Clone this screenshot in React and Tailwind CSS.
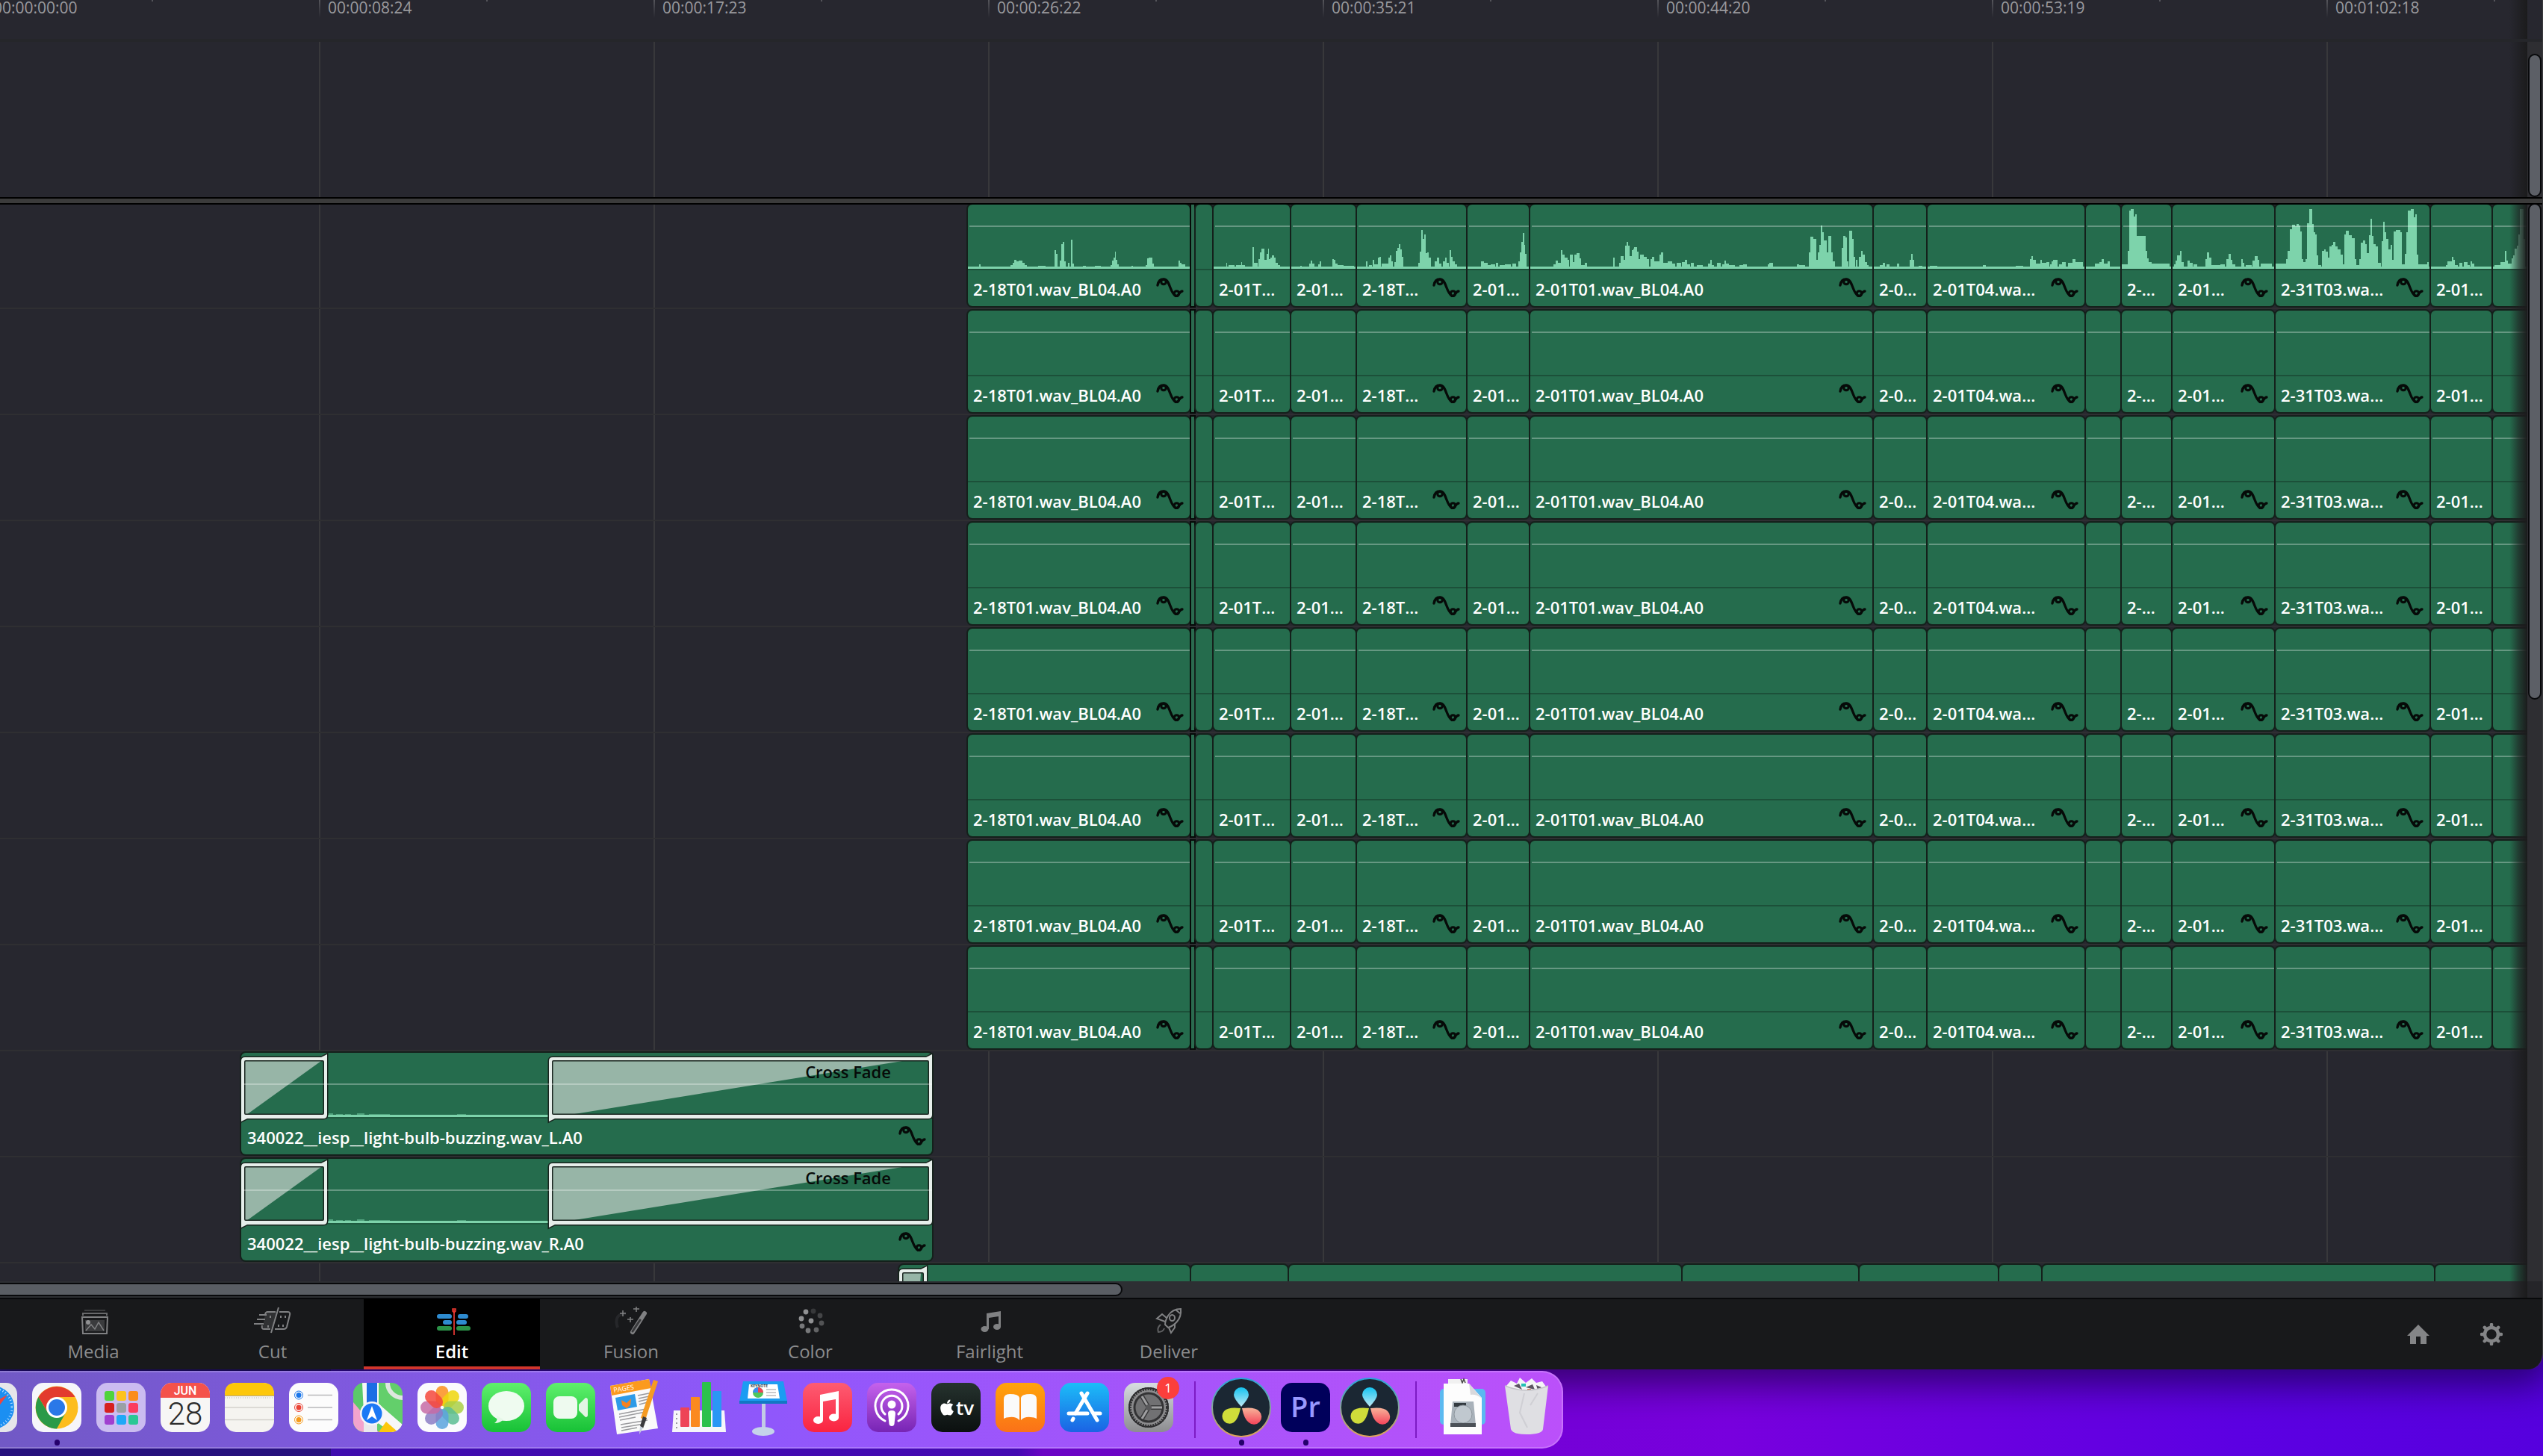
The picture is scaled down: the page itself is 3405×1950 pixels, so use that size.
import React from 'react';
import { FaApple } from 'react-icons/fa';
import clsx from 'clsx';

const RULER = [
  '00:00:00:00',
  '00:00:08:24',
  '00:00:17:23',
  '00:00:26:22',
  '00:00:35:21',
  '00:00:44:20',
  '00:00:53:19',
  '00:01:02:18',
];

// width in px, optional label, fx = automation curve icon,
// wave = list of [x, width, height] peaks
const CLIPS = [
  {
    w: 297, label: '2-18T01.wav_BL04.A0', fx: true, line: true,
    wave: [[15, 2, 6], [57, 4, 5], [60, 3, 8], [62, 3, 12], [65, 3, 10], [68, 5, 11], [73, 3, 8], [76, 3, 5], [94, 10, 4], [116, 2, 25], [118, 2, 20], [123, 2, 11], [125, 2, 33], [127, 2, 36], [129, 2, 10], [134, 2, 8], [138, 2, 39], [140, 2, 7], [154, 4, 4], [170, 8, 4], [191, 2, 5], [193, 2, 11], [195, 2, 15], [197, 1, 23], [198, 2, 12], [200, 2, 6], [219, 2, 4], [238, 2, 5], [240, 2, 14], [242, 5, 15], [247, 2, 7], [282, 2, 11], [284, 2, 8], [286, 5, 6]],
  },
  { w: 4, sliver: true },
  { w: 22 },
  {
    w: 102, label: '2-01T...', line: true,
    wave: [[17, 1, 8], [20, 8, 5], [30, 12, 5], [37, 1, 9], [52, 2, 29], [54, 5, 8], [60, 2, 13], [62, 2, 22], [64, 4, 27], [68, 3, 12], [71, 2, 20], [73, 1, 27], [74, 2, 13], [76, 2, 15], [78, 3, 18], [81, 2, 15], [83, 3, 8], [86, 3, 5]],
  },
  {
    w: 86, label: '2-01...', line: true,
    wave: [[12, 2, 4], [24, 2, 7], [26, 2, 11], [28, 3, 7], [36, 2, 6], [38, 2, 10], [55, 2, 13], [57, 2, 12], [59, 3, 7], [62, 8, 5], [70, 14, 4]],
  },
  {
    w: 146, label: '2-18T...', fx: true, line: true,
    wave: [[12, 2, 10], [16, 4, 5], [21, 2, 12], [23, 5, 6], [28, 2, 15], [30, 2, 16], [33, 9, 7], [42, 2, 15], [44, 2, 18], [46, 2, 10], [50, 2, 9], [52, 2, 24], [54, 2, 28], [56, 2, 33], [58, 2, 26], [60, 2, 16], [82, 2, 8], [84, 2, 23], [86, 2, 52], [88, 2, 40], [90, 2, 46], [92, 2, 21], [94, 2, 22], [96, 3, 15], [104, 3, 10], [107, 3, 15], [110, 3, 7], [115, 3, 10], [118, 2, 15], [120, 3, 8], [124, 2, 25], [126, 2, 16], [128, 3, 10], [131, 3, 6]],
  },
  {
    w: 82, label: '2-01...', line: true,
    wave: [[18, 4, 10], [22, 5, 8], [27, 4, 5], [31, 6, 6], [38, 3, 8], [43, 7, 5], [50, 8, 6], [60, 5, 7], [68, 2, 10], [70, 2, 22], [72, 2, 36], [74, 2, 48], [76, 1, 32], [77, 2, 20]],
  },
  {
    w: 458, label: '2-01T01.wav_BL04.A0', fx: true, line: true,
    wave: [[31, 3, 6], [34, 3, 11], [37, 4, 8], [41, 2, 25], [43, 3, 19], [46, 4, 15], [50, 2, 12], [53, 4, 19], [57, 2, 9], [59, 3, 19], [62, 4, 21], [66, 2, 14], [68, 6, 5], [73, 3, 8], [111, 2, 15], [119, 2, 8], [121, 4, 17], [125, 2, 12], [127, 2, 31], [129, 2, 36], [131, 2, 31], [133, 3, 17], [136, 2, 25], [138, 1, 27], [139, 4, 29], [143, 2, 23], [145, 2, 13], [147, 5, 19], [152, 4, 16], [156, 3, 13], [161, 2, 13], [163, 3, 16], [166, 8, 10], [173, 2, 19], [175, 3, 22], [178, 6, 8], [184, 6, 10], [190, 4, 7], [196, 6, 8], [203, 4, 9], [207, 3, 12], [210, 4, 6], [215, 4, 8], [223, 8, 5], [238, 3, 7], [241, 2, 12], [243, 3, 5], [250, 5, 8], [257, 3, 6], [260, 2, 11], [262, 4, 7], [266, 8, 5], [280, 6, 5], [285, 5, 6], [318, 2, 6], [320, 5, 8], [357, 3, 6], [360, 8, 5], [373, 2, 22], [375, 4, 43], [379, 4, 40], [383, 3, 12], [385, 2, 22], [387, 2, 32], [389, 2, 58], [391, 2, 49], [393, 4, 38], [397, 2, 22], [399, 4, 44], [403, 2, 22], [405, 3, 10], [417, 2, 28], [419, 3, 44], [422, 2, 42], [424, 2, 10], [427, 4, 51], [431, 2, 40], [433, 2, 16], [436, 2, 12], [440, 3, 16], [443, 2, 24], [445, 3, 19], [448, 3, 9], [451, 2, 5]],
  },
  {
    w: 70, label: '2-0...', line: true,
    wave: [[8, 4, 5], [12, 3, 8], [17, 4, 6], [31, 3, 7], [48, 2, 12], [50, 2, 20], [52, 2, 12], [60, 5, 4]],
  },
  {
    w: 210, label: '2-01T04.wa...', fx: true, line: true,
    wave: [[3, 10, 4], [74, 4, 5], [118, 10, 4], [137, 2, 13], [139, 2, 17], [141, 4, 12], [145, 6, 7], [151, 2, 12], [153, 6, 8], [159, 4, 9], [164, 3, 6], [166, 2, 10], [168, 6, 12], [176, 4, 6], [180, 5, 9], [188, 6, 8], [194, 4, 13], [198, 10, 9]],
  },
  {
    w: 46, line: true,
    wave: [[12, 6, 7], [18, 3, 9], [21, 3, 13], [24, 5, 7], [29, 3, 10]],
  },
  {
    w: 66, label: '2-...', line: true,
    wave: [[0, 8, 6], [8, 2, 24], [10, 2, 78], [12, 4, 80], [16, 2, 70], [18, 2, 73], [20, 2, 44], [22, 10, 44], [32, 2, 24], [34, 2, 14], [36, 4, 9], [40, 24, 7]],
  },
  {
    w: 136, label: '2-01...', fx: true, line: true,
    wave: [[2, 2, 6], [4, 2, 11], [6, 4, 18], [10, 2, 24], [12, 3, 9], [20, 3, 11], [23, 4, 8], [28, 5, 6], [44, 2, 13], [46, 3, 22], [49, 3, 15], [52, 12, 5], [64, 6, 6], [72, 3, 13], [75, 3, 20], [78, 2, 12], [80, 4, 6], [92, 2, 13], [94, 2, 8], [98, 8, 5], [107, 3, 11], [110, 4, 17], [114, 2, 12], [118, 15, 7]],
  },
  {
    w: 206, label: '2-31T03.wa...', fx: true, line: true,
    wave: [[0, 14, 7], [14, 2, 13], [16, 3, 24], [19, 3, 53], [22, 4, 59], [26, 2, 57], [28, 3, 60], [31, 2, 58], [33, 2, 50], [35, 2, 13], [37, 4, 9], [40, 2, 13], [42, 3, 61], [45, 4, 80], [49, 2, 60], [51, 2, 49], [53, 2, 46], [55, 2, 18], [57, 4, 5], [62, 3, 24], [65, 2, 26], [67, 3, 23], [70, 2, 15], [72, 3, 30], [75, 2, 32], [77, 3, 36], [80, 3, 30], [83, 4, 26], [87, 3, 19], [90, 2, 6], [92, 2, 46], [94, 4, 51], [98, 4, 45], [102, 4, 41], [106, 2, 13], [108, 4, 5], [112, 2, 13], [114, 3, 35], [117, 3, 38], [120, 2, 33], [122, 3, 21], [125, 2, 45], [127, 2, 67], [129, 2, 44], [131, 3, 33], [134, 3, 30], [137, 4, 8], [142, 2, 37], [144, 2, 63], [146, 2, 49], [148, 3, 40], [151, 3, 26], [154, 2, 32], [156, 2, 12], [158, 3, 50], [161, 6, 52], [167, 2, 49], [169, 4, 6], [173, 2, 20], [175, 2, 49], [177, 4, 78], [181, 4, 80], [185, 2, 69], [187, 2, 73], [189, 2, 19], [191, 12, 6], [203, 2, 9]],
  },
  {
    w: 81, label: '2-01...', line: true,
    wave: [[20, 3, 5], [22, 6, 10], [28, 2, 16], [30, 2, 12], [32, 4, 5], [38, 4, 8], [44, 5, 9], [49, 3, 5], [53, 2, 10], [55, 3, 7]],
  },
  {
    w: 60, line: true,
    wave: [[2, 8, 5], [10, 6, 9], [16, 2, 24], [18, 2, 11], [20, 5, 7], [25, 2, 14], [27, 2, 18], [29, 3, 27], [32, 2, 31], [34, 2, 46], [36, 5, 80], [41, 2, 40]],
  },
];

const LOWER_CLIPS = [389, 129, 525, 235, 185, 56, 524, 200];

const TABS = ['Media', 'Cut', 'Edit', 'Fusion', 'Color', 'Fairlight', 'Deliver'];

/* ---------- Timeline ---------- */

function CurveIcon() {
  return (
    <svg viewBox="0 0 37 26" className="h-[26px] w-[37px] shrink-0" fill="none" stroke="#060a08" strokeWidth="3.300" strokeLinecap="round">
      <path d="M2 10 C3 4 6 2 10 2 C19 2 18 21 27 25 C30 25 31 18 35 18" />
      <circle cx="10" cy="5.500" r="3.300" strokeWidth="3" />
      <circle cx="27.500" cy="21" r="3.300" strokeWidth="3" />
    </svg>
  );
}

function Waveform({ peaks, width }) {
  const base = 84;
  const d = peaks.map(([x, w, h]) => `M${x} ${base}v${-h}h${w}v${h}z`).join('');
  return (
    <svg width={width} height={base} className="block shrink-0" fill="#7dd3ab" shapeRendering="crispEdges">
      <path d={`M0 ${base}v-3h${width}v3z${d}`} />
    </svg>
  );
}

function Clip({ clip, showWave }) {
  if (clip.sliver) {
    return <div className="h-[136px] shrink-0 bg-[#2b6b4f] shadow-[0_0_0_2px_#060a08]" style={{ width: clip.w }} />;
  }
  return (
    <div
      className="flex h-[136px] shrink-0 flex-col overflow-hidden rounded-md bg-[#256c4d] shadow-[0_0_0_2px_#14201b]"
      style={{ width: clip.w }}
    >
      <div className="relative flex h-[86px] items-end">
        {showWave && clip.wave && <Waveform peaks={clip.wave} width={clip.w} />}
        {clip.line && <div className="absolute top-7 right-0 left-0.5 h-0.5 bg-white/30" />}
      </div>
      <div className="flex grow items-start justify-between border-t-2 border-[#1c5039] pt-2.5 pr-2 pl-[7px]">
        {clip.label && <span className="text-[22px] leading-[30px] font-semibold whitespace-nowrap text-white">{clip.label}</span>}
        {clip.fx && <CurveIcon />}
      </div>
    </div>
  );
}

function Track({ children, className }) {
  return (
    <div className={clsx('flex h-[142px] gap-0.5 overflow-hidden border-b-2 border-[#2f2f32] pt-0.5', className)}>
      {children}
    </div>
  );
}

// ramp = [bottom x, distance of the top end from the right edge]
function FadeBox({ width, ramp, children }) {
  const w = width;
  return (
    <div className="relative h-[96px] shrink-0" style={{ width }}>
      <svg width={w} height="96" className="absolute inset-0 overflow-visible">
        <path d={`M5 11H${w - ramp[1]}L${ramp[0]} 83H5z`} fill="#97b5a7" />
        <path
          fillRule="evenodd"
          fill="#e6eeea"
          stroke="#18241e"
          strokeWidth="3"
          paintOrder="stroke"
          d={`M0 11Q0 6 5 6H${w - 8}L${w} 2V83Q${w} 88 ${w - 5} 88H8L0 92z M6 10Q4 10 4 12V81Q4 83 6 83H${w - 6}Q${w - 4} 83 ${w - 4} 81V12Q${w - 4} 10 ${w - 6} 10z`}
        />
      </svg>
      {children}
    </div>
  );
}

function BuzzClip({ name }) {
  return (
    <div className="relative ml-[323px] h-[136px] w-[925px] shrink-0 rounded-md bg-[#256c4d] shadow-[0_0_0_2px_#14201b]">
      <div className="flex h-[86px]">
        <FadeBox width={115} ramp={[7, 8]} />
        <div className="flex grow items-end">
          <svg width="297" height="8" className="block" fill="#7dd3ab" shapeRendering="crispEdges">
            <path d="M0 5H297V8H0z" />
            <path d="M2 3h6v2h-6zM12 4h9v1h-9zM24 4h8v1h-8zM40 3h10v2h-10zM56 4h28v1h-28zM174 4h12v1h-12z" fill="#4fa17c" />
          </svg>
        </div>
        <FadeBox width={513} ramp={[28, 40]}>
          <div className="relative flex justify-end pt-2.5 pr-[55px]">
            <span className="text-[22px] leading-[30px] font-semibold text-[#060a08]">Cross Fade</span>
          </div>
        </FadeBox>
      </div>
      <div className="absolute top-[41px] right-0 left-0.5 h-0.5 bg-white/30" />
      <div className="flex items-start justify-between border-t-2 border-[#1c5039]/60 pt-2.5 pr-2 pl-2">
        <span className="text-[22px] leading-[30px] font-semibold whitespace-nowrap text-white">{name}</span>
        <CurveIcon />
      </div>
    </div>
  );
}

function EdgeFade() {
  return <div className="pointer-events-none absolute inset-y-0 right-0 w-6 bg-linear-to-r from-transparent via-[#1e1e20]/60 to-[#1b1b1c]" />;
}

function Ruler() {
  return (
    <div className="flex h-14 border-b-4 border-[#25262a]">
      <div className="relative min-w-0 grow overflow-hidden">
        <div className="-ml-[21px] flex">
          {RULER.map((time) => (
            <div key={time} className="grid w-[448px] shrink-0 grid-cols-2">
              <div className="flex gap-2.5">
                <span className="h-6 w-0.5 bg-linear-to-b from-[#55555b] to-[#27272f]" />
                <span className="text-[21px] leading-5 text-[#9a9a9e]">{time}</span>
              </div>
              <span className="h-0.5 w-0.5 bg-[#55555b]" />
            </div>
          ))}
        </div>
        <EdgeFade />
      </div>
      <div className="w-5 shrink-0" />
    </div>
  );
}

const GRID = 'bg-[linear-gradient(90deg,#38383b_2px,transparent_2px)] bg-[length:448px_100%] bg-[position:427px_0]';

function Timeline() {
  return (
    <div className="bg-[#27272f]">
      <Ruler />

      {/* video tracks */}
      <div className="flex h-52">
        <div className={clsx('relative grow', GRID)}>
          <EdgeFade />
        </div>
        <div className="flex w-5 shrink-0 justify-center bg-[#2e2e32] pt-4">
          <div className="w-[18px] rounded-full border-2 border-[#08090b] bg-[#5c5f66]" />
        </div>
      </div>

      <div className="relative z-10 h-2 border-t-2 border-black bg-[#3b3b3b] shadow-[0_2px_0_#000]" />

      {/* audio tracks */}
      <div className="flex">
        <div className={clsx('relative min-w-0 grow overflow-hidden', GRID)}>
          {[0, 1, 2, 3, 4, 5, 6, 7].map((row) => (
            <Track key={row} className="pl-[1296px]">
              {CLIPS.map((clip, i) => (
                <Clip key={i} clip={clip} showWave={row === 0} />
              ))}
            </Track>
          ))}
          <Track>
            <BuzzClip name="340022__iesp__light-bulb-buzzing.wav_L.A0" />
          </Track>
          <Track>
            <BuzzClip name="340022__iesp__light-bulb-buzzing.wav_R.A0" />
          </Track>
          <div className="flex h-6 gap-0.5 overflow-hidden pt-0.5 pl-[1204px]">
            {LOWER_CLIPS.map((w, i) => (
              <div key={i} className="h-9 shrink-0 rounded-md bg-[#256c4d] shadow-[0_0_0_2px_#14201b]" style={{ width: w }}>
                {i === 0 && <FadeBox width={37} ramp={[24, 8]} />}
              </div>
            ))}
          </div>
          <EdgeFade />
        </div>
        <div className="flex w-5 shrink-0 items-start justify-center bg-[#2e2e32]">
          <div className="h-[665px] w-[18px] rounded-full border-2 border-[#08090b] bg-[#5c5f66]" />
        </div>
      </div>

      {/* horizontal scrollbar */}
      <div className="flex h-6 border-b-2 border-[#08090b]">
        <div className="relative grow bg-[#2d2f33] pt-0.5">
          <div className="-ml-4 h-[18px] w-[1519px] rounded-full border-2 border-[#08090b] bg-[#5a5e64]" />
          <EdgeFade />
        </div>
        <div className="w-5 shrink-0 bg-[#252529]" />
      </div>
    </div>
  );
}

/* ---------- Page tabs ---------- */

function TabIcon({ name }) {
  const svg = { viewBox: '0 0 50 38', className: 'h-[38px] w-[50px]', fill: 'none', stroke: '#808183', strokeWidth: 2 };
  if (name === 'Media') {
    return (
      <svg {...svg}>
        <path d="M13 5H41" stroke="#3c3d3f" />
        <path d="M11 12V9H43V12" stroke="#68696b" />
        <path d="M10 14H44L43 36H11z" />
        <rect x="14" y="18" width="26" height="15" fill="#3a3b3d" stroke="none" />
        <circle cx="18" cy="21" r="3" fill="#909193" stroke="none" />
        <path d="M15 32L22 24L27 30L32 21L39 32" strokeWidth="1.500" />
      </svg>
    );
  }
  if (name === 'Cut') {
    return (
      <svg {...svg}>
        <path d="M15 9Q16 7 18 7H30L24 29H14Q11 29 12 26z" fill="#303133" stroke="none" />
        <path d="M29 7H18Q16 7 15 10M11 25Q10 30 13 30H22M34 7H45Q49 7 48 11L44 27Q43 30 40 30H28M7 11H17M4 17H15M0 23H13" />
        <path d="M33 1L23 35" />
        <path d="M22 12v3M19 25v3M36 12v3M42 12v3M33 24v3M39 24v3" />
      </svg>
    );
  }
  if (name === 'Edit') {
    return (
      <svg {...svg} stroke="none">
        <g fill="#2e8bd0">
          <rect x="5" y="10" width="20" height="6" rx="3" />
          <rect x="33" y="10" width="14" height="6" rx="3" />
          <rect x="13" y="18" width="12" height="6" rx="3" />
          <rect x="31" y="18" width="14" height="6" rx="3" />
        </g>
        <g fill="#2b9348">
          <rect x="5" y="26" width="20" height="6" rx="3" />
          <rect x="31" y="26" width="19" height="6" rx="3" />
        </g>
        <path d="M28 4V38" stroke="#c9302c" strokeWidth="2" />
        <path d="M26 3H30V6L28 8L26 6z" fill="none" stroke="#f03a30" strokeWidth="1.500" />
      </svg>
    );
  }
  if (name === 'Fusion') {
    return (
      <svg {...svg}>
        <path d="M7 28Q1 10 18 9" stroke="#26272a" strokeWidth="4" />
        <path d="M27 34L43 9" strokeWidth="6" strokeLinecap="round" />
        <path d="M27 33L37 18" stroke="#37383a" strokeWidth="3" strokeLinecap="round" />
        <path d="M32 0V7M28 3H36M14 5V13M10 9H18M24 14V21M20 17H28" strokeWidth="1.500" />
      </svg>
    );
  }
  if (name === 'Color') {
    return (
      <svg {...svg} stroke="none">
        <g fill="#909193">
          <circle cx="19" cy="7" r="3.400" />
          <circle cx="13" cy="16" r="3.400" />
          <circle cx="26" cy="19" r="3.400" />
          <circle cx="14" cy="26" r="3.400" fill="#77787a" />
          <circle cx="22" cy="32" r="3.400" fill="#77787a" />
          <circle cx="33" cy="31" r="3.400" fill="#626365" />
          <circle cx="40" cy="22" r="3.400" fill="#525355" />
          <circle cx="38" cy="12" r="3.400" fill="#444547" />
          <circle cx="29" cy="6" r="3.400" fill="#37383a" />
        </g>
      </svg>
    );
  }
  if (name === 'Fairlight') {
    return (
      <svg {...svg} fill="#808183" stroke="none">
        <path d="M21 9L40 6V27H37V13L24 15V30H21z" />
        <ellipse cx="18.500" cy="30" rx="5" ry="4" />
        <ellipse cx="35" cy="27" rx="5" ry="4" />
      </svg>
    );
  }
  return (
    <svg {...svg}>
      <path d="M41 3Q30 3 24 12Q20 19 20 24L24 28Q31 26 36 20Q42 13 41 3zM34 4L40 9" />
      <ellipse cx="29.500" cy="15" rx="3.500" ry="4" />
      <path d="M22 15L16 10L9 16L20 20M25 28L28 35L33 28L33 23" />
      <path d="M14 24Q9 28 11 34Q17 34 19 29" stroke="#5f6062" />
    </svg>
  );
}

function PageBar() {
  return (
    <nav className="flex h-[94px] items-stretch gap-1 bg-[#18191b] pl-[7px]">
      {TABS.map((tab) => (
        <button
          key={tab}
          className={clsx(
            'flex w-[236px] shrink-0 flex-col items-center gap-1.5 border-b-4 pt-2.5 text-2xl',
            tab === 'Edit' ? 'border-[#d1362c] bg-black font-semibold text-white' : 'border-transparent text-[#8b8c8e]'
          )}
        >
          <TabIcon name={tab} />
          <span className="leading-8">{tab}</span>
        </button>
      ))}
      <div className="ml-auto flex items-center gap-[68px] pr-[53px]">
        <button aria-label="Home">
          <svg viewBox="0 0 30 30" className="size-[30px]" fill="#848587">
            <path d="M15 2L30 17H26V28H18V18H12V28H4V17H0z" />
          </svg>
        </button>
        <button aria-label="Settings">
          <svg viewBox="0 0 30 30" className="size-[30px]" fill="none" stroke="#848587">
            <circle cx="15" cy="15" r="9" strokeWidth="4.500" />
            <path d="M15 2V5M15 25V28M2 15H5M25 15H28M5.800 5.800L8 8M22 22L24.200 24.200M5.800 24.200L8 22M22 8L24.200 5.800" strokeWidth="4.500" strokeLinecap="round" />
          </svg>
        </button>
      </div>
    </nav>
  );
}

/* ---------- Dock ---------- */

function Tile({ fill, children }) {
  return (
    <svg viewBox="0 0 66 66" className="size-[66px] overflow-visible">
      <rect width="66" height="66" rx="15" fill={fill} />
      {children}
    </svg>
  );
}

function Gradient({ id, from, to }) {
  return (
    <linearGradient id={id} x1="0" y1="0" x2="0" y2="1">
      <stop offset="0" stopColor={from} />
      <stop offset="1" stopColor={to} />
    </linearGradient>
  );
}

function Safari() {
  return (
    <Tile fill="#e6e6ea">
      <circle cx="33" cy="33" r="29" fill="#1b8ff2" />
      <circle cx="33" cy="33" r="26" fill="none" stroke="#bfe3ff" strokeWidth="3" strokeDasharray="1 3" />
      <path d="M53 16L29 29L37 37z" fill="#f0453c" />
      <path d="M13 50L29 29L37 37z" fill="#eef2f6" />
    </Tile>
  );
}

function Chrome() {
  return (
    <Tile fill="#f6f6fa">
      <circle cx="33" cy="33" r="28.500" fill="#fdbd1d" />
      <path d="M33 19H57.500A28.500 28.500 0 0 0 8.500 19L20 38z" fill="#e33b2e" />
      <path d="M8.500 19A28.500 28.500 0 0 0 33 61.500L45.500 39L33 33L21 40z" fill="#2a9a48" />
      <circle cx="33" cy="33" r="14" fill="#fff" />
      <circle cx="33" cy="33" r="11" fill="#2a78e8" />
    </Tile>
  );
}

function Launchpad() {
  const colors = ['#4fd33c', '#fdc21c', '#fb8c1a', '#d6201f', '#9aa0a6', '#fb3d5f', '#a03fd0', '#1fa8f7', '#2ac795'];
  return (
    <Tile fill="#cbbcf0">
      {colors.map((c, i) => (
        <rect key={c} x={11 + (i % 3) * 16} y={11 + Math.floor(i / 3) * 16} width="13" height="13" rx="3" fill={c} />
      ))}
    </Tile>
  );
}

function Calendar() {
  return (
    <div className="flex size-[66px] flex-col items-center overflow-hidden rounded-[15px] bg-[#f7f6f5]">
      <div className="w-full bg-[#f4524b] pt-0.5 text-center font-['Roboto',sans-serif] text-[16px] leading-[18px] font-medium text-white">JUN</div>
      <div className="font-['Roboto',sans-serif] text-[42px] leading-[44px] font-light text-[#2b2b2b]">28</div>
    </div>
  );
}

function Notes() {
  return (
    <Tile fill="#f5f4f0">
      <path d="M0 17V15Q0 0 15 0H51Q66 0 66 15V17z" fill="#fdc70a" />
      <path d="M0 17.500H66" stroke="#b5a88a" />
      <path d="M0 20H66" stroke="#b8b6b0" strokeDasharray="1 2" />
      <path d="M0 33H66M0 49.500H66" stroke="#d3d1cc" strokeWidth="1.500" />
    </Tile>
  );
}

function Reminders() {
  return (
    <Tile fill="#fcfcfc">
      {['#1a76ea', '#ea4335', '#f59a1b'].map((c, i) => (
        <g key={c}>
          <circle cx="13" cy={16.5 + i * 16.5} r="5.500" fill="none" stroke={c} strokeWidth="1" />
          <circle cx="13" cy={16.5 + i * 16.5} r="3.500" fill={c} />
          <path d={`M25 ${16.5 + i * 16.5}H58`} stroke="#b9b9bb" strokeWidth="1.500" />
        </g>
      ))}
    </Tile>
  );
}

function Maps() {
  return (
    <Tile fill="#63cf6b">
      <defs>
        <clipPath id="maps-tile"><rect width="66" height="66" rx="15" /></clipPath>
      </defs>
      <g clipPath="url(#maps-tile)">
        <path d="M0 0H14V66H0z" fill="#5bc96a" />
        <path d="M0 26L34 66H0z" fill="#f3a3cd" />
        <path d="M12 0H34V28L66 56V66H50L14 40z" fill="#f7f7f7" />
        <path d="M34 66L44 52L60 66z" fill="#fdc80b" />
        <path d="M14 44V66H32V44z" fill="#e9e9ec" />
        <path d="M18 0H32V30H18z" fill="#1c6de4" />
        <circle cx="66" cy="0" r="20" fill="none" stroke="#dfe7df" strokeWidth="6" />
      </g>
      <circle cx="25" cy="41" r="16" fill="#f5f5f8" />
      <circle cx="25" cy="41" r="13.500" fill="#1a78f5" />
      <path d="M25 31L32 50L25 45L18 50z" fill="#fff" />
    </Tile>
  );
}

function Photos() {
  const petals = ['#fb8f1d', '#efd60c', '#a9cf47', '#5cbd93', '#5ba3dd', '#8b7cc4', '#c56ba6', '#f4483c'];
  return (
    <Tile fill="#fbfbfd">
      {petals.map((c, i) => (
        <rect key={c} x="24.500" y="4" width="17" height="27" rx="8.500" fill={c} fillOpacity="0.850" transform={`rotate(${i * 45} 33 33)`} />
      ))}
    </Tile>
  );
}

function Messages() {
  return (
    <Tile fill="url(#green)">
      <ellipse cx="33" cy="31" rx="24" ry="20" fill="#effbf0" />
      <path d="M20 44Q22 51 17 54Q25 54 29 49z" fill="#e5f7e7" />
    </Tile>
  );
}

function FaceTime() {
  return (
    <Tile fill="url(#green)">
      <rect x="10" y="18" width="32" height="30" rx="8" fill="#eefaef" />
      <path d="M44 29L53 20Q56 20 56 23V43Q56 46 53 46L44 37z" fill="#e2f5e4" />
    </Tile>
  );
}

function Pages() {
  return (
    <svg viewBox="0 0 66 66" className="size-[66px] overflow-visible">
      <path d="M0 4L52 -5L64 61L9 69z" fill="#fafafa" />
      <path d="M0 4L52 -5L55 7L2 17z" fill="#fb9a1e" />
      <text x="5" y="13" transform="rotate(-9 5 13)" fontSize="9" fill="#fff">PAGES</text>
      <path d="M7 20L33 15L36 32L10 37z" fill="#2d9be8" />
      <path d="M15 23L22 27L28 21L27 30L22 34L16 30z" fill="#f58220" />
      <path d="M37 17L52 14M38 21L52 18M38 25L50 22M39 29L50 26M12 42L48 35M12 46L47 39M13 50L34 46M14 56L50 50M15 60L45 55M15 64L36 60" stroke="#9a9a9d" strokeWidth="1.300" />
      <path d="M58 -4L64 -2L47 50L41 47z" fill="#f59b22" />
      <path d="M44 45L49 47L44 61L40 58z" fill="#3a3a3c" />
      <path d="M40 58L44 60L39 69z" fill="#c9d2dc" />
    </svg>
  );
}

function Numbers() {
  return (
    <svg viewBox="0 0 66 66" className="size-[66px] overflow-visible">
      <path d="M-1 37H67L69 66H-3z" fill="#f6f6f9" />
      <path d="M3 41V62" stroke="#9a9aa0" strokeWidth="2" strokeDasharray="2 4" />
      <rect x="8" y="33" width="12" height="26" rx="1" fill="#ee4357" />
      <rect x="22" y="19" width="12" height="40" rx="1" fill="#fb8a1f" />
      <rect x="37" y="-1" width="12" height="60" rx="1" fill="#2cc14c" />
      <rect x="51" y="11" width="12" height="48" rx="1" fill="#2a97f5" />
    </svg>
  );
}

function Keynote() {
  return (
    <svg viewBox="0 0 66 66" className="size-[66px] overflow-visible">
      <rect x="31" y="26" width="5" height="40" fill="#c3cbe6" />
      <ellipse cx="33" cy="65" rx="15" ry="6" fill="#c5d3ea" />
      <path d="M6 -2H60L65 25H1z" fill="#1b9cf2" />
      <path d="M1 24H65V28H1z" fill="#1277c4" />
      <path d="M14 2H52L55 21H12z" fill="#fff" />
      <text x="16" y="6" fontSize="5" fontWeight="700" fill="#444">KEYNOTE</text>
      <circle cx="26" cy="13" r="7" fill="#4fc65c" />
      <path d="M26 13V6A7 7 0 0 0 19 13z" fill="#3a8df0" />
      <path d="M26 13V6A7 7 0 0 1 33 13z" fill="#ee4357" />
      <path d="M37 9H50M37 13H50M37 17H50" stroke="#b9b9bd" strokeWidth="1.500" />
    </svg>
  );
}

function Music() {
  return (
    <Tile fill="url(#music)">
      <path d="M23 16L48 11V47H44V22L27 25V50H23z" fill="#fff" />
      <ellipse cx="20.500" cy="50" rx="6.500" ry="5" fill="#fff" />
      <ellipse cx="41.500" cy="46.500" rx="6.500" ry="5" fill="#fff" />
    </Tile>
  );
}

function Podcasts() {
  return (
    <Tile fill="url(#podcasts)">
      <g fill="none" stroke="#fff" strokeWidth="3" strokeLinecap="round">
        <path d="M24 51A22 22 0 1 1 42 51" />
        <path d="M24 42A14 14 0 1 1 42 42" />
      </g>
      <circle cx="33" cy="29" r="5.500" fill="#fff" />
      <path d="M28 41Q28 37 33 37Q38 37 38 41L36.500 55Q36 58 33 58Q30 58 29.500 55z" fill="#fff" />
    </Tile>
  );
}

function AppleTv() {
  return (
    <div className="flex size-[66px] items-center justify-center rounded-[15px] bg-linear-to-b from-[#26332f] to-[#0b100f] text-white">
      <FaApple className="size-6" />
      <span className="text-[26px] leading-8 font-semibold">tv</span>
    </div>
  );
}

function Books() {
  return (
    <Tile fill="url(#books)">
      <path d="M11 48V22Q11 15 19 15Q31 15 32 20V50Q27 45 19 46Q14 46 11 48z" fill="#fafafa" />
      <path d="M55 48V22Q55 15 47 15Q35 15 34 20V50Q39 45 47 46Q52 46 55 48z" fill="#fafafa" />
    </Tile>
  );
}

function AppStore() {
  return (
    <Tile fill="url(#appstore)">
      <g stroke="#fff" strokeWidth="5" strokeLinecap="round" fill="none">
        <path d="M37 14L21 41" />
        <path d="M29 14L50 50" />
        <path d="M12 41H37M46 41H54" />
        <path d="M18 48L17 50" />
      </g>
    </Tile>
  );
}

function SystemSettings() {
  return (
    <div className="relative">
      <Tile fill="url(#settings)">
        <circle cx="33" cy="33" r="26" fill="#8b8b8d" stroke="#2b2b2d" strokeWidth="2" />
        <circle cx="33" cy="33" r="25" fill="none" stroke="#2f2f31" strokeWidth="4" strokeDasharray="2 1.500" />
        <circle cx="33" cy="33" r="19" fill="#717173" stroke="#333335" strokeWidth="3" />
        <path d="M33 33H51M33 33L24 18M33 33L24 48" stroke="#39393b" strokeWidth="6" />
        <path d="M33 33H51M33 33L24 18M33 33L24 48" stroke="#a0a0a2" strokeWidth="3" />
        <circle cx="33" cy="33" r="4" fill="#59595b" />
      </Tile>
      <span className="absolute -top-2 -right-2 flex size-[30px] items-center justify-center rounded-full bg-[#fb3f3c] text-[17px] text-white">1</span>
    </div>
  );
}

function Resolve() {
  return (
    <svg viewBox="0 0 66 66" className="size-[66px] overflow-visible">
      <circle cx="33" cy="33" r="39" fill="#1b2733" stroke="url(#rim)" strokeWidth="2" />
      <path d="M33 32Q23 21 23 16A10 10 0 0 1 43 16Q43 21 33 32z" fill="url(#drop-blue)" />
      <path d="M32 34Q29 49 23 53A10 10 0 0 1 10 38Q15 32 32 34z" fill="#cfdc3a" />
      <path d="M34 34Q37 49 43 53A10 10 0 0 0 57 38Q52 32 34 34z" fill="url(#drop-red)" />
    </svg>
  );
}

function Premiere() {
  return (
    <div className="flex size-[66px] items-center justify-center rounded-[15px] bg-[#00005b] pb-1 text-[38px] leading-none font-semibold text-[#9999ff]">
      Pr
    </div>
  );
}

function Documents() {
  return (
    <svg viewBox="0 0 66 66" className="size-[66px] overflow-visible">
      <rect x="3" y="8" width="61" height="48" rx="5" fill="#5bb9f0" />
      <path d="M14 -5H40V10H14z" fill="#f1f1f1" />
      <path d="M31 -5l2 5l2 -5l2 5" stroke="#444" fill="none" strokeWidth="1.500" />
      <path d="M8 1H42L59 20V69H8z" fill="#fdfdfd" />
      <path d="M42 1L44 16Q52 15 59 21z" fill="#d9d9dc" />
      <path d="M20 25H48L51 57H17z" fill="#a9b2ba" />
      <path d="M22 27H38V32H22z" fill="#333a40" />
      <circle cx="34" cy="42" r="12" fill="#c0c8cf" stroke="#8f989f" />
      <path d="M17 54H51V59H17z" fill="#4b5157" />
    </svg>
  );
}

function Trash() {
  return (
    <svg viewBox="0 0 66 66" className="size-[66px] overflow-visible">
      <path d="M6 4L12 -3L20 1L24 -7L32 0L40 -6L46 0L54 -2L59 5L54 11H12z" fill="#f4f4f6" />
      <path d="M16 4l7 -3l4 8zM32 6l9 -4l3 7zM46 3l7 3l-5 4z" fill="#5b5560" />
      <path d="M26 1h6v4h-6z" fill="#24bfb4" />
      <path d="M34 8h5v2h-5z" fill="#d7683a" />
      <path d="M4 4Q33 16 62 4L55 62Q54 69 33 69Q14 69 12 62z" fill="#dfdfe3" />
      <path d="M4 4Q33 16 62 4" fill="none" stroke="#c3c3c8" strokeWidth="1.500" />
      <path d="M30 14L24 40L34 60M48 14L38 30" stroke="#cfcfd4" strokeWidth="2" fill="none" />
    </svg>
  );
}

const DOCK = [
  { name: 'Safari', Icon: Safari },
  { name: 'Google Chrome', Icon: Chrome, running: true },
  { name: 'Launchpad', Icon: Launchpad },
  { name: 'Calendar', Icon: Calendar },
  { name: 'Notes', Icon: Notes },
  { name: 'Reminders', Icon: Reminders },
  { name: 'Maps', Icon: Maps },
  { name: 'Photos', Icon: Photos },
  { name: 'Messages', Icon: Messages },
  { name: 'FaceTime', Icon: FaceTime },
  { name: 'Pages', Icon: Pages },
  { name: 'Numbers', Icon: Numbers },
  { name: 'Keynote', Icon: Keynote },
  { name: 'Music', Icon: Music },
  { name: 'Podcasts', Icon: Podcasts },
  { name: 'TV', Icon: AppleTv },
  { name: 'Books', Icon: Books },
  { name: 'App Store', Icon: AppStore },
  { name: 'System Preferences', Icon: SystemSettings },
  null,
  { name: 'DaVinci Resolve', Icon: Resolve, running: true },
  { name: 'Premiere Pro', Icon: Premiere, running: true },
  { name: 'Resolve Project', Icon: Resolve },
  null,
  { name: 'Documents', Icon: Documents },
  { name: 'Trash', Icon: Trash },
];

function DockDefs() {
  return (
    <svg className="absolute size-0" aria-hidden="true">
      <defs>
        <Gradient id="green" from="#5ff06c" to="#17c136" />
        <Gradient id="music" from="#fd5c72" to="#fa2440" />
        <Gradient id="podcasts" from="#c562ec" to="#7724b4" />
        <Gradient id="books" from="#ffa40a" to="#fb7118" />
        <Gradient id="appstore" from="#1cbdf8" to="#1b63e4" />
        <Gradient id="settings" from="#d7dde0" to="#8c8c8f" />
        <Gradient id="rim" from="#2aa5dc" to="#e0a35a" />
        <Gradient id="drop-blue" from="#13c3f0" to="#bfeaf5" />
        <Gradient id="drop-red" from="#f7b49a" to="#f5445a" />
      </defs>
    </svg>
  );
}

function Dock() {
  return (
    <div className="relative mt-0.5 -ml-16 flex h-[104px] w-fit rounded-[28px] border-2 border-white/20 bg-linear-to-r from-[#6f59c2] via-[#8f57fb] to-[#bb50fa] bg-origin-border pr-1 pl-[9px]">
      <DockDefs />
      {DOCK.map((item, i) =>
        item ? (
          <button key={item.name} aria-label={item.name} className="flex w-[86px] shrink-0 flex-col items-center gap-2.5 pt-3.5">
            <item.Icon />
            {item.running && <span className="h-2 w-[7px] rounded-full bg-[#25006c]" />}
          </button>
        ) : (
          <div key={i} className="flex w-[38px] shrink-0 justify-center">
            <span className="mt-3 h-[76px] w-0.5 bg-[#7d1bc4]" />
          </div>
        )
      )}
    </div>
  );
}

export default function App() {
  return (
    <div className="min-h-screen overflow-hidden bg-[linear-gradient(90deg,#26107c_0%,#26107c_13%,#3f0cae_13%,#4409b2_40%,#6a04c4_41%,#7800de_68%,#5c00e2_88%,#5600de_100%)] pb-2.5 font-['Open_Sans','Noto_Sans',sans-serif]">
      <div className="overflow-hidden rounded-br-[20px] border-r border-[#3a3a3d] shadow-[0_10px_50px_10px_rgba(10,0,40,0.6)]">
        <Timeline />
        <PageBar />
      </div>
      <Dock />
    </div>
  );
}
